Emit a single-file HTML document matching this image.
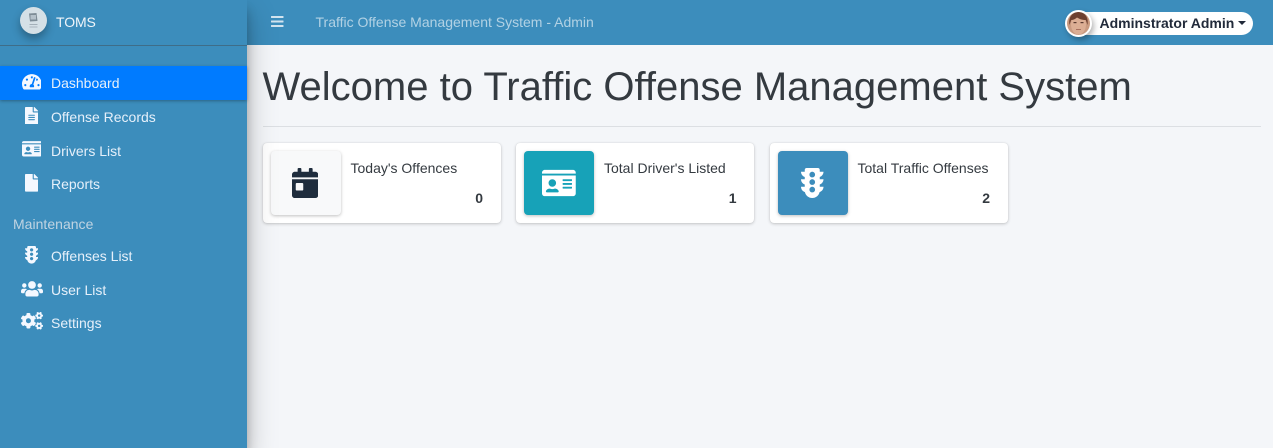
<!DOCTYPE html>
<html><head><meta charset="utf-8"><style>
*{box-sizing:border-box}
html,body{margin:0;padding:0;width:1273px;height:448px;overflow:hidden;background:#f4f6f9;font-family:"Liberation Sans",sans-serif;color:#343a40}
.a{position:absolute;white-space:nowrap}
.side{position:absolute;left:0;top:0;width:247px;height:448px;background:#3c8dbc;box-shadow:0 14px 28px rgba(0,0,0,.25),0 10px 10px rgba(0,0,0,.22);z-index:5}
.nav{position:absolute;left:247px;top:0;width:1026px;height:45px;background:#3c8dbc}
.navt{font-size:14px;color:rgba(255,255,255,.6);line-height:20px}
.item{position:absolute;left:51px;font-size:14px;line-height:20px;color:#e6f0fa;white-space:nowrap}
.ic{position:absolute;fill:#f4f8ff}
.card{position:absolute;top:143px;width:238px;height:80px;background:#fff;border-radius:4px;box-shadow:0 0 1px rgba(0,0,0,.125),0 1px 3px rgba(0,0,0,.2)}
.box{position:absolute;left:8px;top:8px;width:70px;height:64px;border-radius:4px;box-shadow:0 1px 3px rgba(0,0,0,.25)}
.lbl{position:absolute;left:87.5px;top:15px;font-size:14px;line-height:20px;color:#343a40;white-space:nowrap}
.num{position:absolute;right:18px;top:45px;font-size:14px;line-height:20px;font-weight:700;color:#343a40}
</style></head><body>
<svg width="0" height="0" style="position:absolute"><defs>
<path id="tl" d="M384 192h-64v-37.88c37.17-13.22 64-48.38 64-90.12h-64V32c0-17.67-14.33-32-32-32H96C78.33 0 64 14.33 64 32v32H0c0 41.74 26.83 76.9 64 90.12V192H0c0 41.74 26.83 76.9 64 90.12V320H0c0 42.84 28.25 78.69 66.99 91.05C79.42 468.72 130.6 512 192 512s112.58-43.28 125.01-100.95C355.75 398.69 384 362.84 384 320h-64v-37.88c37.17-13.22 64-48.38 64-90.12zM192 416c-26.51 0-48-21.49-48-48s21.49-48 48-48 48 21.49 48 48-21.49 48-48 48zm0-128c-26.51 0-48-21.49-48-48s21.49-48 48-48 48 21.49 48 48-21.49 48-48 48zm0-128c-26.51 0-48-21.49-48-48 0-26.51 21.49-48 48-48s48 21.49 48 48c0 26.51-21.49 48-48 48z"/>
<path id="idc" d="M528 32H48C21.5 32 0 53.5 0 80v16h576V80c0-26.5-21.5-48-48-48zM0 432c0 26.5 21.5 48 48 48h480c26.5 0 48-21.5 48-48V128H0v304zm352-232c0-4.4 3.6-8 8-8h144c4.400 0 8 3.600 8 8v16c0 4.400-3.600 8-8 8H360c-4.400 0-8-3.600-8-8v-16zm0 64c0-4.400 3.600-8 8-8h144c4.400 0 8 3.600 8 8v16c0 4.400-3.600 8-8 8H360c-4.400 0-8-3.600-8-8v-16zm0 64c0-4.400 3.600-8 8-8h144c4.400 0 8 3.600 8 8v16c0 4.400-3.600 8-8 8H360c-4.400 0-8-3.600-8-8v-16zM176 192c35.300 0 64 28.700 64 64s-28.700 64-64 64-64-28.700-64-64 28.700-64 64-64zM67.100 396.200C75.500 370.500 99.600 352 128 352h8.200c12.300 5.100 25.700 8 39.800 8s27.600-2.900 39.800-8h8.200c28.400 0 52.500 18.500 60.900 44.200 3.200 9.900-5.200 19.800-15.600 19.800H82.700c-10.400 0-18.800-10-15.600-19.800z"/>
</defs></svg>
<div class="nav"></div>
<div class="side">
  <div class="a" style="left:0;top:45px;width:247px;height:1px;background:#3f6d88"></div>
  <div class="a" style="left:20px;top:7px;width:27px;height:27px;border-radius:50%;background:#d5e0e6;box-shadow:0 5px 9px rgba(0,0,0,.3)"></div>
  <svg class="a" style="left:27px;top:12px" width="13" height="18" viewBox="0 0 13 18"><path d="M2 1.500L9.500 1L10.500 9L3 9.500Z" fill="#7d8c96"/><rect x="3.500" y="3" width="5.500" height="4.500" fill="#b4c1ca"/><rect x="2.500" y="12" width="8" height="1" fill="#a3afb8"/><rect x="2.500" y="14.500" width="8" height="1" fill="#a9b5bd"/></svg>
  <div class="a" style="left:56px;top:12px;font-size:14px;line-height:20px;color:#f0f5fa;letter-spacing:-.1px">TOMS</div>

  <div class="a" style="left:0;top:66px;width:247px;height:34px;background:#007bff;box-shadow:0 1px 3px rgba(0,0,0,.3)"></div>
  <svg class="ic" style="left:21.600px;top:73px" width="19.800" height="17.600" viewBox="0 0 576 512"><path d="M288 32C128.94 32 0 160.94 0 320c0 52.8 14.25 102.26 39.06 144.8 5.61 9.62 16.3 15.2 27.44 15.2h443c11.14 0 21.83-5.58 27.44-15.2C561.75 422.26 576 372.8 576 320c0-159.06-128.94-288-288-288zm0 64c14.71 0 26.58 10.13 30.32 23.65-1.11 2.26-2.64 4.23-3.45 6.67l-9.22 27.67c-5.13 3.49-10.97 6.01-17.64 6.01-17.67 0-32-14.33-32-32S270.33 96 288 96zM96 384c-17.67 0-32-14.33-32-32s14.33-32 32-32 32 14.33 32 32-14.33 32-32 32zm48-160c-17.67 0-32-14.33-32-32s14.33-32 32-32 32 14.33 32 32-14.33 32-32 32zm246.77-72.41l-61.33 184C343.13 347.33 352 364.54 352 384c0 11.72-3.38 22.55-8.88 32H232.88c-5.5-9.45-8.88-20.28-8.88-32 0-33.94 26.5-61.43 59.9-63.59l61.34-184.01c4.17-12.56 17.73-19.45 30.36-15.17 12.57 4.19 19.35 17.79 15.17 30.36zm14.66 57.2l15.52-46.55c3.47-1.29 7.13-2.23 11.05-2.23 17.67 0 32 14.33 32 32s-14.33 32-32 32c-11.38-.01-20.89-6.28-26.57-15.22zM480 384c-17.67 0-32-14.33-32-32s14.33-32 32-32 32 14.33 32 32-14.33 32-32 32z"/></svg>
  <div class="item" style="top:73px">Dashboard</div>

  <svg class="ic" style="left:24.900px;top:106.700px" width="13.200" height="17.600" viewBox="0 0 384 512"><path d="M224 136V0H24C10.700 0 0 10.700 0 24v464c0 13.300 10.700 24 24 24h336c13.300 0 24-10.700 24-24V160H248c-13.200 0-24-10.800-24-24zm64 236c0 6.600-5.400 12-12 12H108c-6.600 0-12-5.400-12-12v-8c0-6.600 5.400-12 12-12h168c6.600 0 12 5.400 12 12v8zm0-64c0 6.600-5.400 12-12 12H108c-6.600 0-12-5.400-12-12v-8c0-6.600 5.400-12 12-12h168c6.600 0 12 5.400 12 12v8zm0-72v8c0 6.600-5.400 12-12 12H108c-6.600 0-12-5.400-12-12v-8c0-6.600 5.400-12 12-12h168c6.600 0 12 5.400 12 12zm96-114.100v6.100H256V0h6.100c6.400 0 12.500 2.500 17 7l97.900 98c4.500 4.500 7 10.600 7 16.900z"/></svg>
  <div class="item" style="top:107px">Offense Records</div>

  <svg class="ic" style="left:21.600px;top:140px" width="19.800" height="17.600" viewBox="0 0 576 512"><use href="#idc"/></svg>
  <div class="item" style="top:141px">Drivers List</div>

  <svg class="ic" style="left:24.900px;top:174px" width="13.200" height="17.600" viewBox="0 0 384 512"><path d="M224 136V0H24C10.700 0 0 10.700 0 24v464c0 13.300 10.700 24 24 24h336c13.300 0 24-10.700 24-24V160H248c-13.200 0-24-10.800-24-24zm160-14.100v6.100H256V0h6.100c6.400 0 12.500 2.500 17 7l97.900 98c4.500 4.500 7 10.600 7 16.900z"/></svg>
  <div class="item" style="top:174px">Reports</div>

  <div class="a" style="left:13px;top:214px;font-size:14px;line-height:20px;color:#c0d4e2;letter-spacing:.02px">Maintenance</div>

  <svg class="ic" style="left:24.900px;top:246px" width="13.200" height="17.600" viewBox="0 0 384 512"><use href="#tl"/></svg>
  <div class="item" style="top:246px">Offenses List</div>

  <svg class="ic" style="left:20.500px;top:279.700px" width="22" height="17.600" viewBox="0 0 640 512"><path d="M96 224c35.300 0 64-28.700 64-64s-28.700-64-64-64-64 28.700-64 64 28.700 64 64 64zm448 0c35.300 0 64-28.700 64-64s-28.700-64-64-64-64 28.700-64 64 28.700 64 64 64zm32 32h-64c-17.600 0-33.500 7.100-45.100 18.600 40.300 22.100 68.900 62 75.100 109.400h66c17.700 0 32-14.300 32-32v-32c0-35.300-28.700-64-64-64zm-256 0c61.900 0 112-50.100 112-112S381.900 32 320 32 208 82.100 208 144s50.100 112 112 112zm76.800 32h-8.300c-20.800 10-43.900 16-68.500 16s-47.600-6-68.500-16h-8.300C179.600 288 128 339.600 128 403.200V432c0 26.500 21.500 48 48 48h288c26.500 0 48-21.500 48-48v-28.800c0-63.600-51.600-115.200-115.200-115.200zm-223.700-13.400C161.500 263.100 145.600 256 128 256H64c-35.300 0-64 28.700-64 64v32c0 17.700 14.300 32 32 32h65.900c6.300-47.400 34.900-87.300 75.200-109.400z"/></svg>
  <div class="item" style="top:280px">User List</div>

  <svg class="ic" style="left:20.500px;top:312px" width="22" height="17.600" viewBox="0 0 640 512"><path d="M512.100 191l-8.200 14.300c-3 5.300-9.400 7.500-15.100 5.400-11.800-4.400-22.600-10.700-32.100-18.600-4.600-3.800-5.800-10.500-2.800-15.700l8.200-14.300c-6.900-8-12.300-17.300-15.900-27.400h-16.500c-6 0-11.200-4.300-12.200-10.300-2-12-2.100-24.600 0-37.100 1-6 6.200-10.400 12.200-10.400h16.500c3.600-10.100 9-19.400 15.900-27.400l-8.200-14.300c-3-5.200-1.900-11.900 2.800-15.700 9.500-7.900 20.400-14.200 32.100-18.600 5.700-2.100 12.100.1 15.100 5.400l8.200 14.300c10.500-1.900 21.200-1.900 31.700 0L552 6.300c3-5.300 9.400-7.500 15.100-5.400 11.800 4.400 22.600 10.700 32.100 18.600 4.600 3.800 5.800 10.500 2.800 15.700l-8.200 14.300c6.900 8 12.300 17.300 15.900 27.400h16.500c6 0 11.200 4.300 12.200 10.300 2 12 2.100 24.600 0 37.100-1 6-6.200 10.400-12.200 10.400h-16.500c-3.600 10.100-9 19.400-15.900 27.400l8.200 14.300c3 5.200 1.900 11.900-2.800 15.700-9.500 7.900-20.400 14.200-32.100 18.600-5.700 2.100-12.100-.1-15.100-5.400l-8.200-14.300c-10.400 1.900-21.200 1.900-31.700 0zm-10.500-58.800c38.500 29.600 82.400-14.300 52.800-52.800-38.500-29.700-82.400 14.300-52.800 52.800zM386.300 286.100l33.700 16.800c10.100 5.800 14.500 18.100 10.500 29.100-8.900 24.200-26.400 46.400-42.600 65.800-7.400 8.900-20.200 11.100-30.300 5.300l-29.100-16.800c-16 13.700-34.600 24.600-54.900 31.700v33.600c0 11.600-8.300 21.600-19.700 23.600-24.600 4.200-50.400 4.400-75.900 0-11.500-2-20-11.900-20-23.600V418c-20.300-7.200-38.900-18-54.900-31.700L74 403c-10 5.800-22.900 3.600-30.300-5.300-16.200-19.400-33.300-41.600-42.200-65.700-4-10.900.4-23.200 10.500-29.100l33.300-16.800c-3.900-20.900-3.900-42.400 0-63.400L12 205.800c-10.100-5.800-14.600-18.100-10.500-29 8.900-24.200 26-46.400 42.200-65.800 7.400-8.900 20.200-11.100 30.300-5.300l29.100 16.800c16-13.700 34.600-24.600 54.900-31.700V57.100c0-11.500 8.200-21.500 19.600-23.500 24.600-4.200 50.500-4.400 76-.1 11.500 2 20 11.900 20 23.600v33.600c20.300 7.200 38.900 18 54.900 31.700l29.100-16.800c10-5.800 22.900-3.600 30.300 5.300 16.200 19.400 33.200 41.600 42.100 65.800 4 10.900.1 23.200-10 29.100l-33.700 16.800c3.900 21 3.900 42.500 0 63.500zm-117.600 21.100c59.200-77-28.700-164.900-105.700-105.700-59.200 77 28.700 164.900 105.700 105.700zm243.400 182.700l-8.200 14.300c-3 5.300-9.400 7.500-15.100 5.400-11.800-4.400-22.600-10.700-32.100-18.600-4.600-3.800-5.800-10.500-2.800-15.700l8.200-14.300c-6.900-8-12.300-17.300-15.900-27.400h-16.500c-6 0-11.200-4.300-12.200-10.300-2-12-2.100-24.600 0-37.100 1-6 6.200-10.400 12.200-10.400h16.500c3.600-10.100 9-19.400 15.900-27.400l-8.200-14.300c-3-5.200-1.900-11.900 2.800-15.700 9.500-7.900 20.400-14.200 32.100-18.600 5.700-2.100 12.100.1 15.100 5.400l8.200 14.300c10.500-1.900 21.200-1.900 31.700 0l8.200-14.300c3-5.300 9.400-7.500 15.100-5.400 11.800 4.400 22.600 10.700 32.100 18.600 4.600 3.800 5.800 10.500 2.800 15.700l-8.200 14.300c6.900 8 12.300 17.300 15.900 27.400h16.500c6 0 11.200 4.300 12.200 10.300 2 12 2.100 24.600 0 37.100-1 6-6.200 10.400-12.200 10.400h-16.500c-3.600 10.100-9 19.400-15.900 27.400l8.200 14.300c3 5.200 1.900 11.900-2.800 15.700-9.500 7.900-20.400 14.200-32.100 18.600-5.700 2.100-12.100-.1-15.100-5.400l-8.200-14.300c-10.400 1.900-21.200 1.900-31.700 0zM501.600 431c38.500 29.600 82.400-14.300 52.800-52.800-38.500-29.600-82.400 14.300-52.800 52.800z"/></svg>
  <div class="item" style="top:313px">Settings</div>
</div>

<svg class="a" style="left:271px;top:16px" width="12.500" height="11" viewBox="0 0 12.500 11" fill="#d3e4ef"><rect y="0" width="12.500" height="2" rx=".4"/><rect y="4.500" width="12.500" height="2" rx=".4"/><rect y="9" width="12.500" height="2" rx=".4"/></svg>
<div class="a navt" style="left:315.500px;top:12px">Traffic Offense Management System - Admin</div>

<div class="a" style="left:1066px;top:12px;width:187px;height:23px;border-radius:12px;background:#fff"></div>
<div class="a" style="left:1065px;top:10px;width:27px;height:27px;border-radius:50%;background:#fff;box-shadow:2px 3px 6px rgba(0,0,0,.3)"></div>
<svg class="a" style="left:1067px;top:12px" width="23" height="23" viewBox="0 0 23 23"><defs><clipPath id="c"><circle cx="11.500" cy="11.500" r="11.500"/></clipPath></defs><g clip-path="url(#c)"><rect width="23" height="23" fill="#c99a80"/><ellipse cx="11.500" cy="12.500" rx="7.500" ry="10" fill="#dcae94"/><path d="M2.500 13C1 4 6.500 0 11.500 0C16.500 0 22 4 20.500 13L18.800 8C15 8 12.500 7 10 5.500C8.500 7 6 8 4.200 8Z" fill="#6d4030"/><rect x="6.500" y="10" width="3" height="1.200" fill="#5a3a30"/><rect x="13.500" y="10" width="3" height="1.200" fill="#5a3a30"/><rect x="9" y="17" width="5" height="1" fill="#a8705e"/></g></svg>
<div class="a" style="left:1099.500px;top:13px;font-size:14px;line-height:20px;font-weight:700;color:#212a3a">Adminstrator Admin</div>
<div class="a" style="left:1238px;top:21px;width:0;height:0;border-left:4.200px solid transparent;border-right:4.200px solid transparent;border-top:4.200px solid #212a3a"></div>

<div class="a" style="left:262.500px;top:63px;font-size:40px;line-height:48px;color:#343a40">Welcome to Traffic Offense Management System</div>
<div class="a" style="left:263px;top:126px;width:998px;height:1px;background:#dcdfe3"></div>

<div class="card" style="left:263px">
  <div class="box" style="background:#f8f9fa"></div>
  <svg class="a" style="left:29px;top:25px" width="26.250" height="30" viewBox="0 0 448 512" fill="#1f2d3d"><path d="M0 464c0 26.500 21.500 48 48 48h352c26.500 0 48-21.500 48-48V192H0v272zm64-192c0-8.800 7.200-16 16-16h96c8.800 0 16 7.200 16 16v96c0 8.800-7.200 16-16 16H80c-8.800 0-16-7.200-16-16v-96zM400 64h-48V16c0-8.800-7.200-16-16-16h-32c-8.800 0-16 7.200-16 16v48H160V16c0-8.800-7.200-16-16-16h-32c-8.800 0-16 7.200-16 16v48H48C21.500 64 0 85.500 0 112v48h448v-48c0-26.500-21.500-48-48-48z"/></svg>
  <div class="lbl">Today's Offences</div>
  <div class="num">0</div>
</div>

<div class="card" style="left:516px">
  <div class="box" style="background:#17a2b8"></div>
  <svg class="a" style="left:26px;top:25px;fill:#fff" width="33.750" height="30" viewBox="0 0 576 512"><use href="#idc"/></svg>
  <div class="lbl" style="left:88px">Total Driver's Listed</div>
  <div class="num" style="right:17.500px">1</div>
</div>

<div class="card" style="left:770px">
  <div class="box" style="background:#3c8dbc"></div>
  <svg class="a" style="left:31px;top:25px;fill:#fff" width="22.500" height="30" viewBox="0 0 384 512"><use href="#tl"/></svg>
  <div class="lbl">Total Traffic Offenses</div>
  <div class="num">2</div>
</div>
</body></html>
